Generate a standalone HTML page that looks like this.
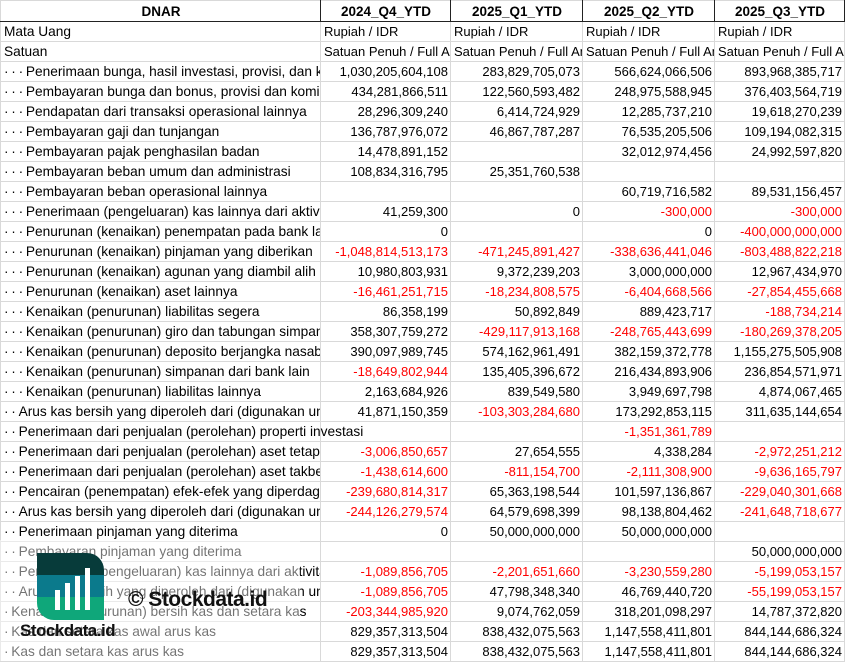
<!DOCTYPE html>
<html><head><meta charset="utf-8"><style>
body{margin:0;width:845px;height:661px;overflow:hidden;background:#fff;position:relative;font-family:"Liberation Sans",sans-serif;font-size:13px;color:#000}
table{border-collapse:collapse;table-layout:fixed;width:844px}
td{height:19px;padding:0 2px 0 3px;border:1px solid #d9d9d9;white-space:nowrap;overflow:hidden;line-height:19px}
td:first-child{font-size:13.7px}
tr.h td{height:20px;font-weight:bold;text-align:center;font-size:13.5px;border:1px solid #d9d9d9;border-bottom:1px solid #222;border-right:1px solid #222}
td.n{text-align:right}
.r{color:#ff0000}
.ov{overflow:visible}
.wm{position:absolute;left:0;top:540px;width:300px;height:121px;background:rgba(255,255,255,0.45)}
</style></head><body>
<table>
<colgroup><col style="width:320px"><col style="width:130px"><col style="width:132px"><col style="width:132px"><col style="width:130px"></colgroup>
<tr class="h"><td>DNAR</td><td>2024_Q4_YTD</td><td>2025_Q1_YTD</td><td>2025_Q2_YTD</td><td>2025_Q3_YTD</td></tr>
<tr><td>Mata Uang</td><td>Rupiah / IDR</td><td>Rupiah / IDR</td><td>Rupiah / IDR</td><td>Rupiah / IDR</td></tr>
<tr><td>Satuan</td><td>Satuan Penuh / Full Amount</td><td>Satuan Penuh / Full Amount</td><td>Satuan Penuh / Full Amount</td><td>Satuan Penuh / Full Amount</td></tr>
<tr><td>·&#8201;·&#8201;·&#8201;Penerimaan bunga, hasil investasi, provisi, dan komisi</td><td class="n">1,030,205,604,108</td><td class="n">283,829,705,073</td><td class="n">566,624,066,506</td><td class="n">893,968,385,717</td></tr>
<tr><td>·&#8201;·&#8201;·&#8201;Pembayaran bunga dan bonus, provisi dan komisi</td><td class="n">434,281,866,511</td><td class="n">122,560,593,482</td><td class="n">248,975,588,945</td><td class="n">376,403,564,719</td></tr>
<tr><td>·&#8201;·&#8201;·&#8201;Pendapatan dari transaksi operasional lainnya</td><td class="n">28,296,309,240</td><td class="n">6,414,724,929</td><td class="n">12,285,737,210</td><td class="n">19,618,270,239</td></tr>
<tr><td>·&#8201;·&#8201;·&#8201;Pembayaran gaji dan tunjangan</td><td class="n">136,787,976,072</td><td class="n">46,867,787,287</td><td class="n">76,535,205,506</td><td class="n">109,194,082,315</td></tr>
<tr><td>·&#8201;·&#8201;·&#8201;Pembayaran pajak penghasilan badan</td><td class="n">14,478,891,152</td><td class="n"></td><td class="n">32,012,974,456</td><td class="n">24,992,597,820</td></tr>
<tr><td>·&#8201;·&#8201;·&#8201;Pembayaran beban umum dan administrasi</td><td class="n">108,834,316,795</td><td class="n">25,351,760,538</td><td class="n"></td><td class="n"></td></tr>
<tr><td>·&#8201;·&#8201;·&#8201;Pembayaran beban operasional lainnya</td><td class="n"></td><td class="n"></td><td class="n">60,719,716,582</td><td class="n">89,531,156,457</td></tr>
<tr><td>·&#8201;·&#8201;·&#8201;Penerimaan (pengeluaran) kas lainnya dari aktivitas</td><td class="n">41,259,300</td><td class="n">0</td><td class="n r">-300,000</td><td class="n r">-300,000</td></tr>
<tr><td>·&#8201;·&#8201;·&#8201;Penurunan (kenaikan) penempatan pada bank lain</td><td class="n">0</td><td class="n"></td><td class="n">0</td><td class="n r">-400,000,000,000</td></tr>
<tr><td>·&#8201;·&#8201;·&#8201;Penurunan (kenaikan) pinjaman yang diberikan</td><td class="n r">-1,048,814,513,173</td><td class="n r">-471,245,891,427</td><td class="n r">-338,636,441,046</td><td class="n r">-803,488,822,218</td></tr>
<tr><td>·&#8201;·&#8201;·&#8201;Penurunan (kenaikan) agunan yang diambil alih</td><td class="n">10,980,803,931</td><td class="n">9,372,239,203</td><td class="n">3,000,000,000</td><td class="n">12,967,434,970</td></tr>
<tr><td>·&#8201;·&#8201;·&#8201;Penurunan (kenaikan) aset lainnya</td><td class="n r">-16,461,251,715</td><td class="n r">-18,234,808,575</td><td class="n r">-6,404,668,566</td><td class="n r">-27,854,455,668</td></tr>
<tr><td>·&#8201;·&#8201;·&#8201;Kenaikan (penurunan) liabilitas segera</td><td class="n">86,358,199</td><td class="n">50,892,849</td><td class="n">889,423,717</td><td class="n r">-188,734,214</td></tr>
<tr><td>·&#8201;·&#8201;·&#8201;Kenaikan (penurunan) giro dan tabungan simpanan</td><td class="n">358,307,759,272</td><td class="n r">-429,117,913,168</td><td class="n r">-248,765,443,699</td><td class="n r">-180,269,378,205</td></tr>
<tr><td>·&#8201;·&#8201;·&#8201;Kenaikan (penurunan) deposito berjangka nasabah</td><td class="n">390,097,989,745</td><td class="n">574,162,961,491</td><td class="n">382,159,372,778</td><td class="n">1,155,275,505,908</td></tr>
<tr><td>·&#8201;·&#8201;·&#8201;Kenaikan (penurunan) simpanan dari bank lain</td><td class="n r">-18,649,802,944</td><td class="n">135,405,396,672</td><td class="n">216,434,893,906</td><td class="n">236,854,571,971</td></tr>
<tr><td>·&#8201;·&#8201;·&#8201;Kenaikan (penurunan) liabilitas lainnya</td><td class="n">2,163,684,926</td><td class="n">839,549,580</td><td class="n">3,949,697,798</td><td class="n">4,874,067,465</td></tr>
<tr><td>·&#8201;·&#8201;Arus kas bersih yang diperoleh dari (digunakan untuk)</td><td class="n">41,871,150,359</td><td class="n r">-103,303,284,680</td><td class="n">173,292,853,115</td><td class="n">311,635,144,654</td></tr>
<tr><td class="ov">·&#8201;·&#8201;Penerimaan dari penjualan (perolehan) properti investasi</td><td class="n"></td><td class="n"></td><td class="n r">-1,351,361,789</td><td class="n"></td></tr>
<tr><td>·&#8201;·&#8201;Penerimaan dari penjualan (perolehan) aset tetap</td><td class="n r">-3,006,850,657</td><td class="n">27,654,555</td><td class="n">4,338,284</td><td class="n r">-2,972,251,212</td></tr>
<tr><td>·&#8201;·&#8201;Penerimaan dari penjualan (perolehan) aset takberwujud</td><td class="n r">-1,438,614,600</td><td class="n r">-811,154,700</td><td class="n r">-2,111,308,900</td><td class="n r">-9,636,165,797</td></tr>
<tr><td>·&#8201;·&#8201;Pencairan (penempatan) efek-efek yang diperdagangkan</td><td class="n r">-239,680,814,317</td><td class="n">65,363,198,544</td><td class="n">101,597,136,867</td><td class="n r">-229,040,301,668</td></tr>
<tr><td>·&#8201;·&#8201;Arus kas bersih yang diperoleh dari (digunakan untuk)</td><td class="n r">-244,126,279,574</td><td class="n">64,579,698,399</td><td class="n">98,138,804,462</td><td class="n r">-241,648,718,677</td></tr>
<tr><td>·&#8201;·&#8201;Penerimaan pinjaman yang diterima</td><td class="n">0</td><td class="n">50,000,000,000</td><td class="n">50,000,000,000</td><td class="n"></td></tr>
<tr><td>·&#8201;·&#8201;Pembayaran pinjaman yang diterima</td><td class="n"></td><td class="n"></td><td class="n"></td><td class="n">50,000,000,000</td></tr>
<tr><td>·&#8201;·&#8201;Penerimaan (pengeluaran) kas lainnya dari aktivitas</td><td class="n r">-1,089,856,705</td><td class="n r">-2,201,651,660</td><td class="n r">-3,230,559,280</td><td class="n r">-5,199,053,157</td></tr>
<tr><td>·&#8201;·&#8201;Arus kas bersih yang diperoleh dari (digunakan untuk)</td><td class="n r">-1,089,856,705</td><td class="n">47,798,348,340</td><td class="n">46,769,440,720</td><td class="n r">-55,199,053,157</td></tr>
<tr><td>·&#8201;Kenaikan (penurunan) bersih kas dan setara kas</td><td class="n r">-203,344,985,920</td><td class="n">9,074,762,059</td><td class="n">318,201,098,297</td><td class="n">14,787,372,820</td></tr>
<tr><td>·&#8201;Kas dan setara kas awal arus kas</td><td class="n">829,357,313,504</td><td class="n">838,432,075,563</td><td class="n">1,147,558,411,801</td><td class="n">844,144,686,324</td></tr>
<tr><td>·&#8201;Kas dan setara kas arus kas</td><td class="n">829,357,313,504</td><td class="n">838,432,075,563</td><td class="n">1,147,558,411,801</td><td class="n">844,144,686,324</td></tr>
</table>
<div class="wm"></div>
<svg style="position:absolute;left:37px;top:553px" width="67" height="67" viewBox="0 0 67 67">
<defs><clipPath id="c"><path d="M0 0H50A17 17 0 0 1 67 17V67H17A17 17 0 0 1 0 50Z"/></clipPath></defs>
<g clip-path="url(#c)">
<rect x="0" y="0" width="67" height="22" fill="#073b3a"/>
<rect x="0" y="22" width="67" height="22" fill="#0b7a8c"/>
<rect x="0" y="44" width="67" height="23" fill="#0fa77a"/>
</g>
<rect x="18" y="37" width="5" height="20" fill="#fff"/>
<rect x="28" y="30" width="5" height="27" fill="#fff"/>
<rect x="38" y="23" width="5" height="34" fill="#fff"/>
<rect x="48" y="15" width="5" height="42" fill="#fff"/>
</svg>
<div style="position:absolute;left:128px;top:588px;font-size:21px;font-weight:bold;color:#111;letter-spacing:-0.5px">© Stockdata.id</div>
<div style="position:absolute;left:20px;top:621px;font-size:17px;font-weight:bold;color:#111;letter-spacing:-0.5px">Stockdata.id</div>
</body></html>
